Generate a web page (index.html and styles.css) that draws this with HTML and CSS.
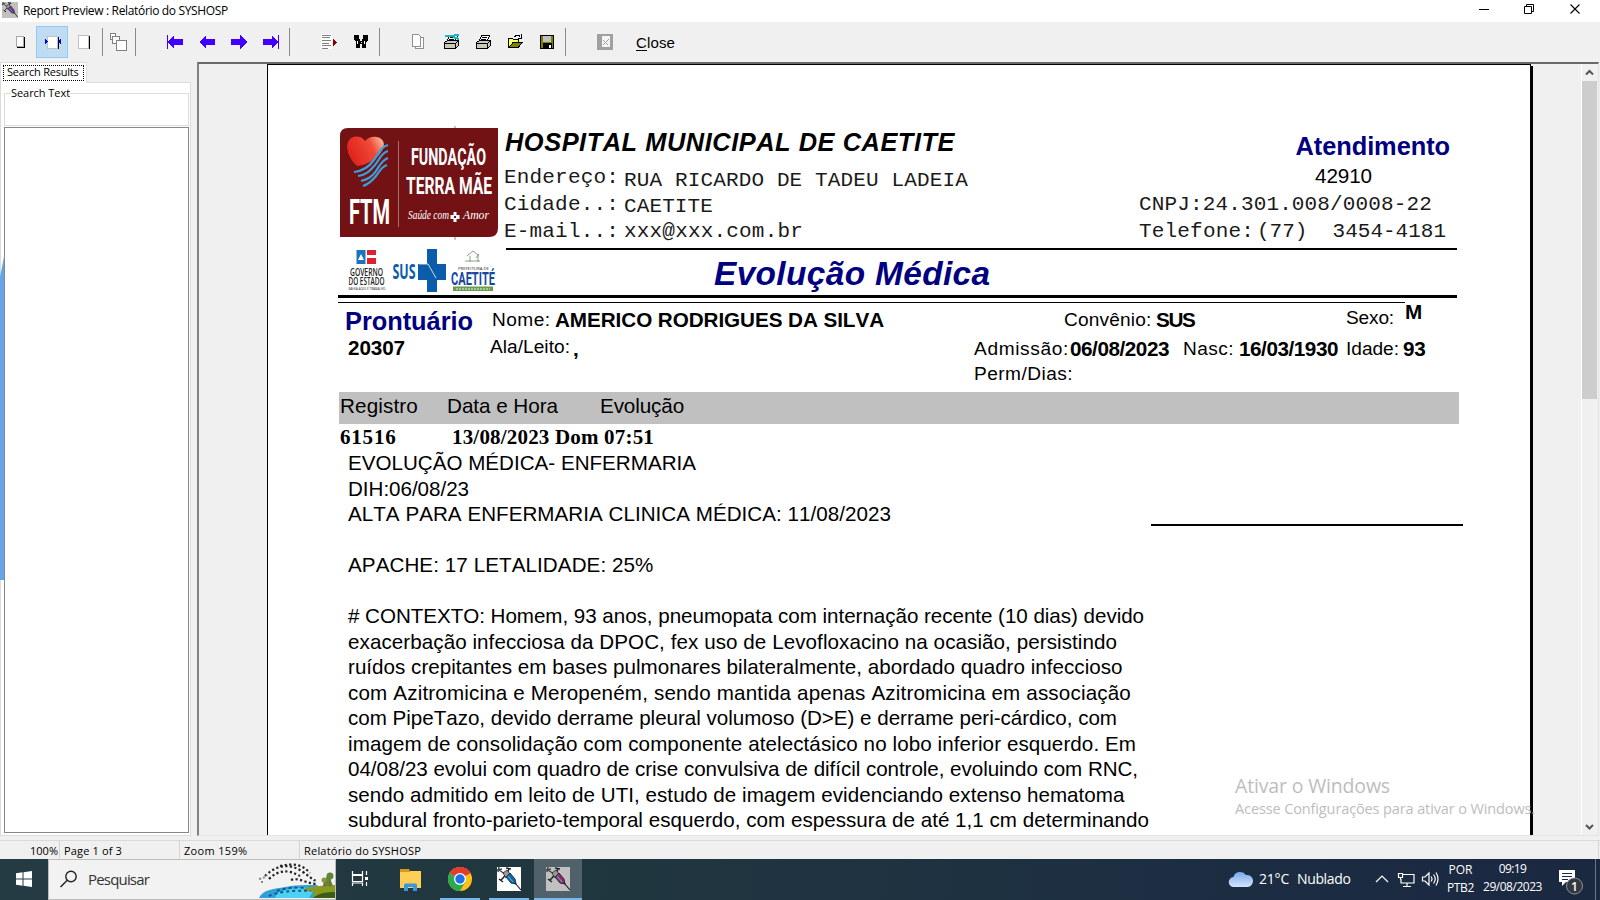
FILE: index.html
```html
<!DOCTYPE html>
<html lang="pt-BR">
<head>
<meta charset="utf-8">
<title>Report Preview : Relatório do SYSHOSP</title>
<link rel="stylesheet" href="styles.css">
</head>
<body>
<svg width="0" height="0" class="defs">
  <defs>
    <g id="syringe">
      <path d="M0 3l5-1M2 0l-1 5M2 3l6 4" stroke="#444" stroke-width="1.4" fill="none"/>
      <path d="M4 13l2-2 5-6 1-4M2 12l4 3M9 1l5 1" stroke="#222" stroke-width="1.5" fill="none"/>
      <path d="M6 6l4-3 3 4-4 4z" fill="#999" stroke="#222" stroke-width=".8"/>
      <path d="M9 10l4-4 5 6 1 5-5-1z" fill="currentColor" stroke="#222" stroke-width=".9"/>
      <path d="M11 9l5 6" stroke="#26c7d8" stroke-width="1.1"/>
      <path d="M18 16l6 7" stroke="#111" stroke-width="1.1"/>
    </g>
    <g id="printer" shape-rendering="crispEdges">
      <path d="M6.500 1.500h8l-2 5h-8z" fill="#fff" stroke="#000"/>
      <path d="M7 3.500h5M6 5.500h5" stroke="#000"/>
      <path d="M1.500 8.500l3-2h11v5l-3 3h-11z" fill="#c8c8c8" stroke="#000"/>
      <path d="M1.500 9.500h11v5M12.500 9.500l3-3" stroke="#000" fill="none"/>
      <path d="M7 11.500h4" stroke="#e8e020"/>
    </g>
  </defs>
</svg>

<header class="titlebar">
  <svg class="app-icon" width="16" height="16" viewBox="0 0 24 24"><rect width="24" height="24" fill="#c0c0c0"/><use href="#syringe" color="#7a2a8c"/></svg>
  <span class="caption" data-w="205">Report Preview : Relatório do SYSHOSP</span>
  <svg class="window-buttons" width="120" height="22" viewBox="1470 0 120 22" fill="none" stroke="#000">
    <path d="M1479 9.500h10"/><path d="M1524.500 6.500h7v7h-7zM1526.500 6v-1.500h7v7h-2"/><path d="M1570.500 4.500l9 9m0-9l-9 9" stroke-width="1.100"/>
  </svg>
</header>

<nav class="toolbar">
  <svg class="tool" viewBox="4 26 32 32"><path d="M16.500 36.500h7v10h-7z" fill="#fff" stroke="#a8a8a8"/><path d="M24.500 37v10.500H17" stroke="#000" fill="none"/></svg>
  <svg class="tool active" viewBox="36 26 32 32"><path d="M47.500 36.500h10v12h-10z" fill="#fff" stroke="#c0c0c0"/><path d="M58.500 37v12" stroke="#000"/><path d="M45 39v5l3-2.500zM61 39v5l-3-2.500z" fill="#0000e0"/></svg>
  <svg class="tool" viewBox="68 26 32 32"><path d="M78.500 35.500h10v13h-10z" fill="#fff" stroke="#c0c0c0"/><path d="M89.500 36v13" stroke="#000"/></svg>
  <i class="sep sep-near"></i>
  <svg class="tool" viewBox="103 26 32 32"><g fill="#fff" stroke="#808080"><path d="M110.500 33.500h5v6h-5z"/><path d="M112.500 36.500h7v7h-7z"/><path d="M116.500 40.500h10v10h-10z"/></g></svg>
  <i class="sep"></i>
  <svg class="tool group-start" viewBox="159 26 32 32"><path d="M167 35h1v14h-1zM168 42l6-7v4h9v6h-9v4z" fill="#4000ff"/></svg>
  <svg class="tool" viewBox="191 26 32 32"><path d="M199 42l7-7v4h9v6h-9v4z" fill="#4000ff"/></svg>
  <svg class="tool" viewBox="223 26 32 32"><path d="M247 42l-7-7v4h-9v6h9v4z" fill="#4000ff"/></svg>
  <svg class="tool" viewBox="255 26 32 32"><path d="M278 35h1v14h-1zM278 42l-6-7v4h-9v6h9v4z" fill="#4000ff"/></svg>
  <i class="sep sep-near"></i>
  <svg class="tool group-start-sm" viewBox="311 26 32 32"><path d="M321 34h11v15h-11z" fill="#fff"/><path d="M322 35.500h9M322 37.500h8M322 40.500h9M322 43.500h7M322 45.500h9M322 48.500h6" stroke="#808080"/><path d="M333 39l4.500 3.500-4.500 3.500z" fill="#8b0000"/></svg>
  <svg class="tool" viewBox="343 26 32 32"><path d="M354 35h5v4h1v2h2v-2h1v-4h5v5l-2 2v6h-4v-4h-2v4h-4v-6l-2-2z" fill="#000"/><path d="M357 41h1v3h-1zM361 42h1v1h-1zM364 41h1v3h-1z" fill="#fff"/></svg>
  <i class="sep sep-wide"></i>
  <svg class="tool group-start-sm" viewBox="401 26 32 32"><path d="M415.500 37.500h8v11h-8z" fill="#fff" stroke="#909090"/><path d="M412.500 34.500h6l2 2v10h-8z" fill="#fff" stroke="#909090"/></svg>
  <svg class="tool" viewBox="433 26 32 32"><use href="#printer" x="443" y="34"/><path d="M445 36h8l3-1h3M453 37l6 2" stroke="#18b8c0" stroke-width="2"/></svg>
  <svg class="tool" viewBox="465 26 32 32"><use href="#printer" x="475" y="34"/></svg>
  <svg class="tool" viewBox="497 26 32 32"><path d="M508.500 47.500v-9h4l1 1h5v3h3l-3 5z" fill="#ffff60" stroke="#000"/><path d="M509 47.500l4-5h9l-4 5z" fill="#808000" stroke="#000"/><path d="M514 37l3-2h2l1 2M521 34v4h-3" stroke="#000" fill="none"/></svg>
  <svg class="tool" viewBox="529 26 32 32"><path d="M540.500 35.500h13v13h-13z" fill="#808000" stroke="#000"/><path d="M543 36h8v6h-8z" fill="#c0c0c0"/><path d="M543 43h9v5h-9z" fill="#000"/><path d="M549 45h2v3h-2z" fill="#fff"/></svg>
  <i class="sep sep-last"></i>
  <svg class="tool group-start-md" viewBox="588 26 32 32"><path d="M597 34h16v16h-16z" fill="#a0a0a0"/><path d="M602 36h8v11h-8z" fill="#f4f4f4"/><path d="M603 45l6-6M603 40l5 5" stroke="#a0a0a0"/></svg>
  <span class="close-label" data-w="39"><u>C</u>lose</span>
</nav>

<main class="workspace">
  <aside class="search-pane">
    <div class="tab"><span data-w="71.500">Search Results</span></div>
    <div class="tab-page">
      <fieldset class="search-box"><legend><span data-w="59">Search Text</span></legend></fieldset>
      <div class="results"></div>
    </div>
    <i class="edge-glow"></i>
  </aside>

  <section class="viewer">
    <article class="page">
      <div class="letterhead">
        <svg class="logos" width="168" height="175" viewBox="330 120 168 175">
          <path d="M348 128H498v100q0 9-9 9H340v-101q0-8 8-8z" fill="#731214"/>
          <path d="M455 126v2M455 237v3" stroke="#888"/>
          <defs><linearGradient id="heart" x1="0" x2="1" y1=".4" y2="0"><stop offset="0" stop-color="#e0241c"/><stop offset=".6" stop-color="#f04a38"/><stop offset="1" stop-color="#fbd0b0"/></linearGradient></defs>
          <path d="M357 166C350 160 345 149 348 142c3-7 13-7 17-1 4-5 14-6 18 0 4 7-7 23-26 25z" fill="url(#heart)"/>
          <g fill="none" stroke="#3aa0dc" stroke-width="2.200"><path d="M388 145c-7 2-9 8-14 15s-11 11-20 12"/><path d="M388 151c-7 2-8 8-13 14s-9 10-17 11"/><path d="M388 158c-6 2-8 7-12 13s-8 8-15 10"/><path d="M387 165c-6 2-7 6-11 11s-7 8-13 10"/></g>
          <path d="M398.500 141v86" stroke="#a87070"/>
          <g fill="#fff" font-family="Roboto, sans-serif" font-weight="700">
            <text x="411" y="164.500" font-size="24" textLength="75" lengthAdjust="spacingAndGlyphs">FUNDAÇÃO</text>
            <text x="406" y="193.500" font-size="24" textLength="86" lengthAdjust="spacingAndGlyphs">TERRA MÃE</text>
            <text x="349" y="224" font-size="35" textLength="41" lengthAdjust="spacingAndGlyphs">FTM</text>
          </g>
          <g fill="#fff" font-family="'Liberation Serif', serif" font-style="italic" font-size="12"><text x="408" y="219" textLength="41" lengthAdjust="spacingAndGlyphs">Saúde com</text><text x="463" y="219" textLength="26" lengthAdjust="spacingAndGlyphs">Amor</text></g>
          <path d="M453.500 212h3v3h3v4h-3v3h-3v-3h-3v-4h3z" fill="#fff"/><path d="M454 216h2v2h-2z" fill="#731214"/>
          <path d="M356.500 250h9v14h-9z" fill="#1b75bc"/><path d="M361 254l3 6h-6z" fill="#fff"/><path d="M367 250h9v5h-9zM367 258h9v6h-9z" fill="#e02030"/>
          <g font-family="'Open Sans', sans-serif" fill="#222">
            <text x="350" y="276" font-size="10" font-weight="600" textLength="33" lengthAdjust="spacingAndGlyphs">GOVERNO</text>
            <text x="348.500" y="285" font-size="10" font-weight="600" textLength="36" lengthAdjust="spacingAndGlyphs">DO ESTADO</text>
            <text x="348.500" y="290" font-size="4" textLength="37" lengthAdjust="spacingAndGlyphs">BAHIA AQUI É TRABALHO</text>
            <text x="458" y="270" font-size="4" textLength="31" lengthAdjust="spacingAndGlyphs">PREFEITURA DE</text>
          </g>
          <text x="392.500" y="278.500" font-family="'Open Sans', sans-serif" font-weight="700" font-size="21" fill="#0b5cab" textLength="23" lengthAdjust="spacingAndGlyphs">SUS</text>
          <path d="M427 249h10v15h9v16h-9v12h-10v-12h-9v-16h9z" fill="#0b5cab"/><path d="M419 264l9 0 8 14" stroke="#fff" fill="none" stroke-width=".8"/>
          <text x="451" y="285" font-family="Roboto, sans-serif" font-weight="700" font-size="18" fill="#17479e" textLength="44" lengthAdjust="spacingAndGlyphs">CAETITÉ</text>
          <path d="M453 286.500h40v4.500h-40z" fill="#6d9a4a"/><path d="M456 289h34" stroke="#dfe" stroke-dasharray="2 1"/>
          <path d="M467 256l6-5 5 4v7M470 262v-6M476 258l3-4M465 261h15" stroke="#6a8a6a" fill="none" stroke-width=".8"/>
        </svg>
        <div class="institution">
          <div class="inst-title">
            <h1 data-w="450">HOSPITAL MUNICIPAL DE CAETITE</h1>
            <h2 class="navy" data-w="154.500">Atendimento</h2>
          </div>
          <div class="inst-grid">
            <span data-w="115">Endereço:</span><span class="drop" data-w="344">RUA RICARDO DE TADEU LADEIA</span><span class="number" data-w="57">42910</span>
            <span data-w="115">Cidade..:</span><span class="drop-sm" data-w="89">CAETITE</span><span data-w="293">CNPJ:24.301.008/0008-22</span><span></span>
            <span data-w="115">E-mail..:</span><span data-w="179">xxx@xxx.com.br</span><span data-w="115">Telefone:</span><span class="phone" data-w="189">(77)  3454-4181</span>
          </div>
          <div class="report-name"><span class="navy" data-w="276.500">Evolução Médica</span></div>
        </div>
      </div>
      <div class="double-rule"></div>

      <div class="patient">
        <div class="prow prow-a">
          <b class="big navy" data-w="128">Prontuário</b><span data-w="58.500">Nome:</span><b data-w="329">AMERICO RODRIGUES DA SILVA</b><span data-w="87.500">Convênio:</span><b data-w="38.500">SUS</b><span class="up2" data-w="48">Sexo:</span><b class="up8" data-w="18">M</b>
        </div>
        <div class="prow prow-b">
          <b data-w="57">20307</b><span class="up1" data-w="80">Ala/Leito:</span><b class="down1">,</b><span class="down1" data-w="95">Admissão:</span><b class="down1" data-w="99">06/08/2023</b><span class="down1" data-w="51">Nasc:</span><b class="down1" data-w="99">16/03/1930</b><span class="down1" data-w="53">Idade:</span><b class="down1" data-w="22.500">93</b>
        </div>
        <div class="prow prow-c"><span data-w="99">Perm/Dias:</span></div>
      </div>

      <div class="columns"><span data-w="78">Registro</span><span data-w="111">Data e Hora</span><span data-w="84">Evolução</span></div>
      <div class="entry-head"><span data-w="56.500">61516</span><span data-w="202">13/08/2023 Dom 07:51</span></div>

      <div class="entry">
        <div class="notes">
          <p data-w="348">EVOLUÇÃO MÉDICA- ENFERMARIA</p>
          <p data-w="121">DIH:06/08/23</p>
          <p data-w="543">ALTA PARA ENFERMARIA CLINICA MÉDICA: 11/08/2023</p>
          <p></p>
          <p data-w="305.500">APACHE: 17 LETALIDADE: 25%</p>
          <p></p>
          <p data-w="796">&#35; CONTEXTO: Homem, 93 anos, pneumopata com internação recente (10 dias) devido</p>
          <p data-w="769">exacerbação infecciosa da DPOC, fex uso de Levofloxacino na ocasião, persistindo</p>
          <p data-w="774.500">ruídos crepitantes em bases pulmonares bilateralmente, abordado quadro infeccioso</p>
          <p data-w="783">com Azitromicina e Meropeném, sendo mantida apenas Azitromicina em associação</p>
          <p data-w="769">com PipeTazo, devido derrame pleural volumoso (D&gt;E) e derrame peri-cárdico, com</p>
          <p data-w="788">imagem de consolidação com componente atelectásico no lobo inferior esquerdo. Em</p>
          <p data-w="790">04/08/23 evolui com quadro de crise convulsiva de difícil controle, evoluindo com RNC,</p>
          <p data-w="776.500">sendo admitido em leito de UTI, estudo de imagem evidenciando extenso hematoma</p>
          <p data-w="801">subdural fronto-parieto-temporal esquerdo, com espessura de até 1,1 cm determinando</p>
        </div>
        <div class="signature"></div>
      </div>
    </article>
    <div class="shadow"></div>
    <div class="scrollbar">
      <svg width="15" height="17" viewBox="0 0 15 17"><path d="M4 10.500l3.500-3.500 3.500 3.500" stroke="#555" stroke-width="2" fill="none"/></svg>
      <i class="thumb"></i>
      <svg class="arrow-down" width="15" height="17" viewBox="0 0 15 17"><path d="M4 7l3.500 3.500L11 7" stroke="#555" stroke-width="2" fill="none"/></svg>
    </div>
  </section>
</main>

<footer class="statusbar">
  <span class="s-pct"><span data-w="28">100%</span></span><span class="s-page"><span data-w="58">Page 1 of 3</span></span><span class="s-zoom"><span data-w="63.500">Zoom 159%</span></span><span class="s-name"><span data-w="117">Relatório do SYSHOSP</span></span>
</footer>

<div class="taskbar">
  <svg class="start" width="48" height="41" viewBox="0 859 48 41"><path d="M16 873.300l6.500-1v6.200H16zM23.500 872.200l8.500-1.200v7.500h-8.500zM16 879.500h6.500v6.300l-6.500-1zM23.500 879.500H32v7.500l-8.500-1.200z" fill="#fff"/></svg>
  <div class="search">
    <svg width="20" height="20" viewBox="0 0 20 20" fill="none" stroke="#222" stroke-width="1.400"><circle cx="12" cy="6.500" r="5.200"/><path d="M8.300 10.300L1.500 17"/></svg>
    <span data-w="61">Pesquisar</span>
    <svg class="scene" width="77" height="38" viewBox="259 861 77 38">
      <path d="M260 898c4-9 16-9 26-11s20-2 32-2l16 13z" fill="#2fa0dc"/><path d="M278 893c10-5 24-6 38-5l-6 10h-34z" fill="#4cd0f4"/>
      <path d="M304 889c10-3 22-4 32-4v13h-20c-6-2 2-5-1-6s-10-1-11-3z" fill="#8a9a20"/><path d="M314 898c4-4 12-6 22-6v6z" fill="#3c5c14"/>
      <path d="M329 873l-5 13h10z" fill="#5f8a30"/><circle cx="325" cy="880" r="2.500" fill="#8a9438"/><circle cx="331" cy="876" r="3.500" fill="#5c8838"/><path d="M325 882v5M331 879v8" stroke="#8a5a30"/>
      <g fill="none" stroke="#222" stroke-width="2.200" stroke-dasharray="2.200 2.400"><path d="M266 876c10-10 24-14 38-4s8 7 14 9"/><path d="M270 879c9-9 19-10 31-3"/><path d="M281 866c12-3 22-2 30 7"/><path d="M292 880c8-3 16 4 26 4"/></g>
      <path d="M260 879q6-1 8-4M262 882h3" stroke="#888" fill="none" stroke-width="2" stroke-dasharray="2 2"/>
      <path d="M270 896c8-4 22-6 42-5M278 891c8-3 18-4 28-3" stroke="#145a80" stroke-width="2" stroke-dasharray="3 3" fill="none"/>
    </svg>
  </div>
  <svg class="task" viewBox="334 859 48 41" fill="none" stroke="#fff" stroke-width="1.200"><path d="M352.500 871v3.500h10V871M352.500 886v-3h10v3M352.500 875.500h10v6h-10zM366.500 871v4M366.500 882v4"/><path d="M365 877h3v3h-3z" fill="#fff" stroke="none"/></svg>
  <svg class="task task-files" viewBox="386 859 48 41"><path d="M400 871h21v17h-21z" fill="#ffce57"/><path d="M400 872v-3h9l1.500 3z" fill="#d99a1a"/><path d="M404 888v-3q0-1.500 1.500-1.500h10q1.500 0 1.500 1.500v6h-4v-4h-5v4h-4z" fill="#3a96dd"/></svg>
  <svg class="task running task-chrome" viewBox="440 859 40 41"><circle cx="460" cy="879" r="12" fill="#fbc116"/><path d="M460 879L449.600 873a12 12 0 0 1 20.800 0z" fill="#e33b2e"/><path d="M449.600 873A12 12 0 0 0 460 891l5.200-9-5.200-3z" fill="#2da94f"/><path d="M460 867a12 12 0 0 1 10.400 6.500H460z" fill="#e33b2e"/><circle cx="460" cy="879" r="6" fill="#fff"/><circle cx="460" cy="879" r="4.700" fill="#1a73e8"/></svg>
  <svg class="task running task-app" viewBox="489 859 40 41"><path d="M497 867h24v24h-24z" fill="#fff"/><use href="#syringe" x="497" y="867" color="#1560b0"/></svg>
  <svg class="task running current" viewBox="534 859 48 41"><path d="M546 867h24v24h-24z" fill="#c0c0c0"/><use href="#syringe" x="546" y="867" color="#a0206a"/></svg>
  <div class="tray">
    <svg width="26" height="18" viewBox="0 0 26 18"><defs><linearGradient id="cloud" y1="0" y2="1" x2="0"><stop offset="0" stop-color="#78a8ee"/><stop offset="1" stop-color="#d4e4fb"/></linearGradient></defs><path d="M6 16a5 5 0 0 1-.5-10A7 7 0 0 1 18 4a6 6 0 0 1 2 12z" fill="url(#cloud)"/></svg>
    <span class="temp" data-w="30">21°C</span><span class="sky" data-w="53.500">Nublado</span>
    <svg class="tray-icons" width="66" height="20" viewBox="1373 869 66 20" fill="none" stroke="#fff" stroke-width="1.200"><path d="M1375 882l6-6 6 6"/><path d="M1401 874.500h12v8.500h-13v-4M1406 883v3M1402 886.500h8M1397.500 873.500h4v4h-4zM1399.500 877.500v2"/><path d="M1421.500 877h2.500l4-4v12l-4-4h-2.500zM1430 876.500q2 2.500 0 5M1432.500 874.500q3.500 4.500 0 9M1435 872.500q4 6.500 0 13"/></svg>
    <div class="stack lang"><span data-w="24">POR</span><span data-w="27">PTB2</span></div>
    <div class="stack clock"><span data-w="27.500">09:19</span><span data-w="59">29/08/2023</span></div>
    <svg class="notice" width="28" height="28" viewBox="1557 869 28 28"><path d="M1559 871h16v12h-9l-4 4v-4h-3z" fill="#fff"/><path d="M1562 874.500h10M1562 877.500h10M1562 880.500h6" stroke="#1b2c42"/><circle cx="1574.500" cy="887" r="8" fill="#33383e" stroke="#8a9098"/><text x="1574.500" y="891.500" text-anchor="middle" font-family="'Open Sans', sans-serif" font-size="12" font-weight="600" fill="#fff">1</text></svg>
    <i class="peek"></i>
  </div>
</div>

<div class="watermark"><p class="wm-title"><span data-w="155">Ativar o Windows</span></p><p class="wm-text"><span data-w="300">Acesse Configurações para ativar o Windows.</span></p></div>
<script src="fit.js"></script>
</body>
</html>
```
FILE: styles.css
```css
* { box-sizing: border-box; margin: 0; padding: 0; }
body { width: 1600px; height: 900px; overflow: hidden; background: #f0f0f0; color: #000; font: 12px/16px "Open Sans", "Noto Sans", sans-serif; display: flex; flex-direction: column; position: relative; }
[data-w] { white-space: pre; justify-self: start; }
.defs { position: absolute; }
.navy { color: #000080; }

.titlebar { flex: none; height: 22px; background: #fff; display: flex; align-items: flex-start; padding-left: 2px; }
.app-icon { margin-top: 2px; margin-right: 5px; }
.caption { line-height: 21px; }
.window-buttons { margin-left: auto; margin-right: 10px; }

.toolbar { flex: none; height: 40px; display: flex; align-items: center; padding: 0 0 0 4px; }
.tool { flex: none; width: 32px; height: 32px; shape-rendering: crispEdges; }
.active { background: #c0dcf3; outline: 1px solid #90c8f6; outline-offset: -1px; }
.sep { flex: none; width: 1px; height: 28px; background: #8a8a8a; }
.sep-near { margin-left: 2px; }
.sep-last { margin-left: 4px; }
.sep-wide { margin-left: 4px; }
.group-start { margin-left: 23px; }
.group-start-sm { margin-left: 21px; }
.group-start-md { margin-left: 22px; }
.close-label { margin-left: 16px; font: 15px/20px "Liberation Sans", Arial, sans-serif; padding-top: 1px; }
.close-label u { text-underline-offset: 2px; }

.workspace { flex: none; height: 774px; display: flex; }
.search-pane { position: relative; width: 197px; display: flex; flex-direction: column; }
.tab { width: 87px; height: 21px; background: #fff; border: 1px solid #dcdcdc; border-bottom: 0; padding: 2px; font-size: 11px; margin-bottom: -1px; z-index: 1; }
.tab span { display: block; width: 81px; height: 16px; line-height: 12px; padding-left: 3px; border: 1px dotted #000; }
.tab-page { width: 191px; height: 754px; background: #fff; border: 1px solid #dcdcdc; padding: 3px 0 0 3px; display: flex; flex-direction: column; font-size: 11px; }
.search-box { width: 185px; height: 40px; border: 1px solid #dcdcdc; padding-left: 6px; }
.search-box legend { height: 14px; line-height: 14px; }
.results { width: 185px; height: 706px; margin-top: 1px; border: 1px solid #828790; }
.edge-glow { position: absolute; left: 0; top: 195px; width: 4px; height: 323px; background: #66a6e8; clip-path: polygon(0 6%, 100% 0, 100% 100%, 0 100%); }

.viewer { width: 1402px; height: 774px; border-left: 2px solid #808080; border-top: 2px solid #696969; border-bottom: 1px solid #e3e3e3; border-right: 1px solid #e3e3e3; display: flex; padding-left: 68px; }
.page { width: 1264px; height: 771px; background: #fff; border: 1px solid #000; border-bottom: 0; overflow: hidden; font: 20.700px/24px "Liberation Sans", Arial, sans-serif; font-kerning: none; }
.shadow { width: 2px; margin-top: 2px; background: #000; }
.scrollbar { width: 17px; margin-left: auto; border-left: 1px solid #fff; display: flex; flex-direction: column; }
.scrollbar svg { flex: none; }
.thumb { width: 15px; height: 318px; background: #cdcdcd; }
.arrow-down { margin-top: auto; }

.letterhead { height: 230px; display: flex; padding: 55px 0 0 62px; }
.logos { flex: none; }
.institution { margin-left: 6px; width: 954px; }
.inst-title { height: 37px; display: flex; justify-content: space-between; padding: 7px 8px 0 1px; font-size: 25.400px; line-height: 30px; }
.inst-title h1 { font-size: inherit; font-style: italic; }
.inst-title h2 { font-size: inherit; margin-top: 4px; width: 154.500px; }
.inst-grid { height: 91px; display: grid; grid-template-columns: 120px 515px 117px 200px; grid-template-rows: 27px 27px 27px; font: 21px/26px "Liberation Mono", monospace; color: #1a1a1a; padding-top: 8px; }
.inst-grid .drop { padding-top: 3px; }
.inst-grid .drop-sm { padding-top: 2px; }
.inst-grid .number { grid-column: 3 / 5; margin: -2px 0 0 176px; font: 20.700px/26px "Liberation Sans", Arial, sans-serif; color: #000; }
.inst-grid .phone { margin-left: 1px; }
.report-name { margin-left: 2px; width: 951px; border-top: 2px solid #000; padding: 4px 0 0 208px; font-size: 33.400px; line-height: 40px; font-weight: 700; font-style: italic; }
.double-rule { width: 1119px; height: 8px; margin-left: 70px; border-top: 3px solid #000; background: linear-gradient(#000, #000) 0 4px / 1067px 1px no-repeat; }

.prow { display: grid; }
.patient { height: 89px; padding-top: 4px; }
.patient span { font-size: 19.100px; }
.patient b, .patient span { height: 24px; }
.prow-a { grid-template-columns: 147px 63px 509px 92px 190px 59px 40px; padding: 1px 0 0 77px; height: 29px; }
.prow-a .big { font-size: 25.400px; margin-top: 1px; }
.prow-b { grid-template-columns: 142px 83px 401px 96px 113px 56px 107px 57px 40px; padding: 0 0 0 80px; height: 24px; }
.prow-c { padding: 2px 0 0 706px; }
.up1 { margin-top: -1px; }
.up2 { margin-top: -2px; }
.up8 { margin-top: -8px; }
.down1 { margin-top: 1px; }

.columns { width: 1120px; height: 32px; margin-left: 71px; padding-left: 1px; background: #c0c0c0; display: grid; grid-template-columns: 107px 153px 200px; line-height: 27px; }
.entry-head { height: 26px; margin-left: 72px; display: grid; grid-template-columns: 112px 300px; font: 700 21px/27px "Liberation Serif", "Times New Roman", serif; }
.entry { display: flex; padding-left: 80px; }
.notes { width: 803px; }
.notes p { height: 25.500px; line-height: 25.500px; font-size: 20.600px; white-space: pre; }
.signature { flex: none; width: 312px; height: 2px; background: #000; margin-top: 74px; }

.statusbar { flex: none; height: 23px; display: flex; padding-top: 5px; font-size: 11px; line-height: 20px; background: linear-gradient(#dadada, #dadada) 0 4px / 100% 1px no-repeat; }
.statusbar > span { border-right: 1px solid #d4d4d4; height: 17px; padding-left: 4px; }
.statusbar .s-pct { width: 60px; padding-left: 30px; }
.s-page, .s-zoom { width: 120px; }
.statusbar .s-name { width: 1299px; }

.taskbar { flex: none; height: 41px; display: flex; background: linear-gradient(90deg, #243b43, #20363f 40%, #1b2b42 85%, #1a2840); color: #fff; }
.start { flex: none; }
.search { width: 288px; height: 41px; background: #f2f2f2; border: 1px solid #bdbdbd; display: flex; align-items: center; padding-left: 10px; color: #333; font-size: 15px; }
.search span { margin-left: 9px; width: 62px; padding-bottom: 2px; }
.search .scene { margin-left: auto; }
.task { flex: none; width: 48px; height: 41px; margin-left: -2px; }
.task-files { margin-left: 4px; }
.task-chrome, .task-app { width: 40px; margin-left: 6px; }
.task-app { margin-left: 9px; }
.current { margin-left: 5px; background-color: #50616a; }
.running { background-image: linear-gradient(#76b9ed, #76b9ed); background-size: 100% 2px; background-position: bottom; background-repeat: no-repeat; }
.tray { margin-left: auto; display: flex; align-items: center; font-size: 14px; }
.temp { width: 38px; margin-left: 5px; padding-bottom: 2px; }
.sky { width: 77px; padding-bottom: 2px; }
.tray-icons { margin: 0 7px 2px 0; }
.stack { display: flex; flex-direction: column; align-items: center; font-size: 12px; line-height: 18px; height: 38px; }
.lang { width: 27px; }
.clock { width: 59px; margin-left: 9px; height: 39px; }
.notice { margin: 4px 0 0 15px; }
.peek { width: 1px; height: 41px; background: #68747f; margin: 0 4px 0 10px; }

.watermark { position: absolute; left: 1235px; top: 772px; color: #bdbdbd; }
.wm-title { font-size: 19.500px; line-height: 28px; }
.wm-text { font-size: 14.500px; line-height: 18px; }
```
FILE: fit.js
```js
// Spaces the glyphs of each field so that the run fills its nominal width.
document.querySelectorAll('[data-w]').forEach(function (el) {
  var range = document.createRange();
  range.selectNodeContents(el);
  var natural = range.getBoundingClientRect().width;
  var gap = (parseFloat(el.dataset.w) - natural) / el.textContent.length;
  el.style.letterSpacing = gap.toFixed(3) + 'px';
});
```
